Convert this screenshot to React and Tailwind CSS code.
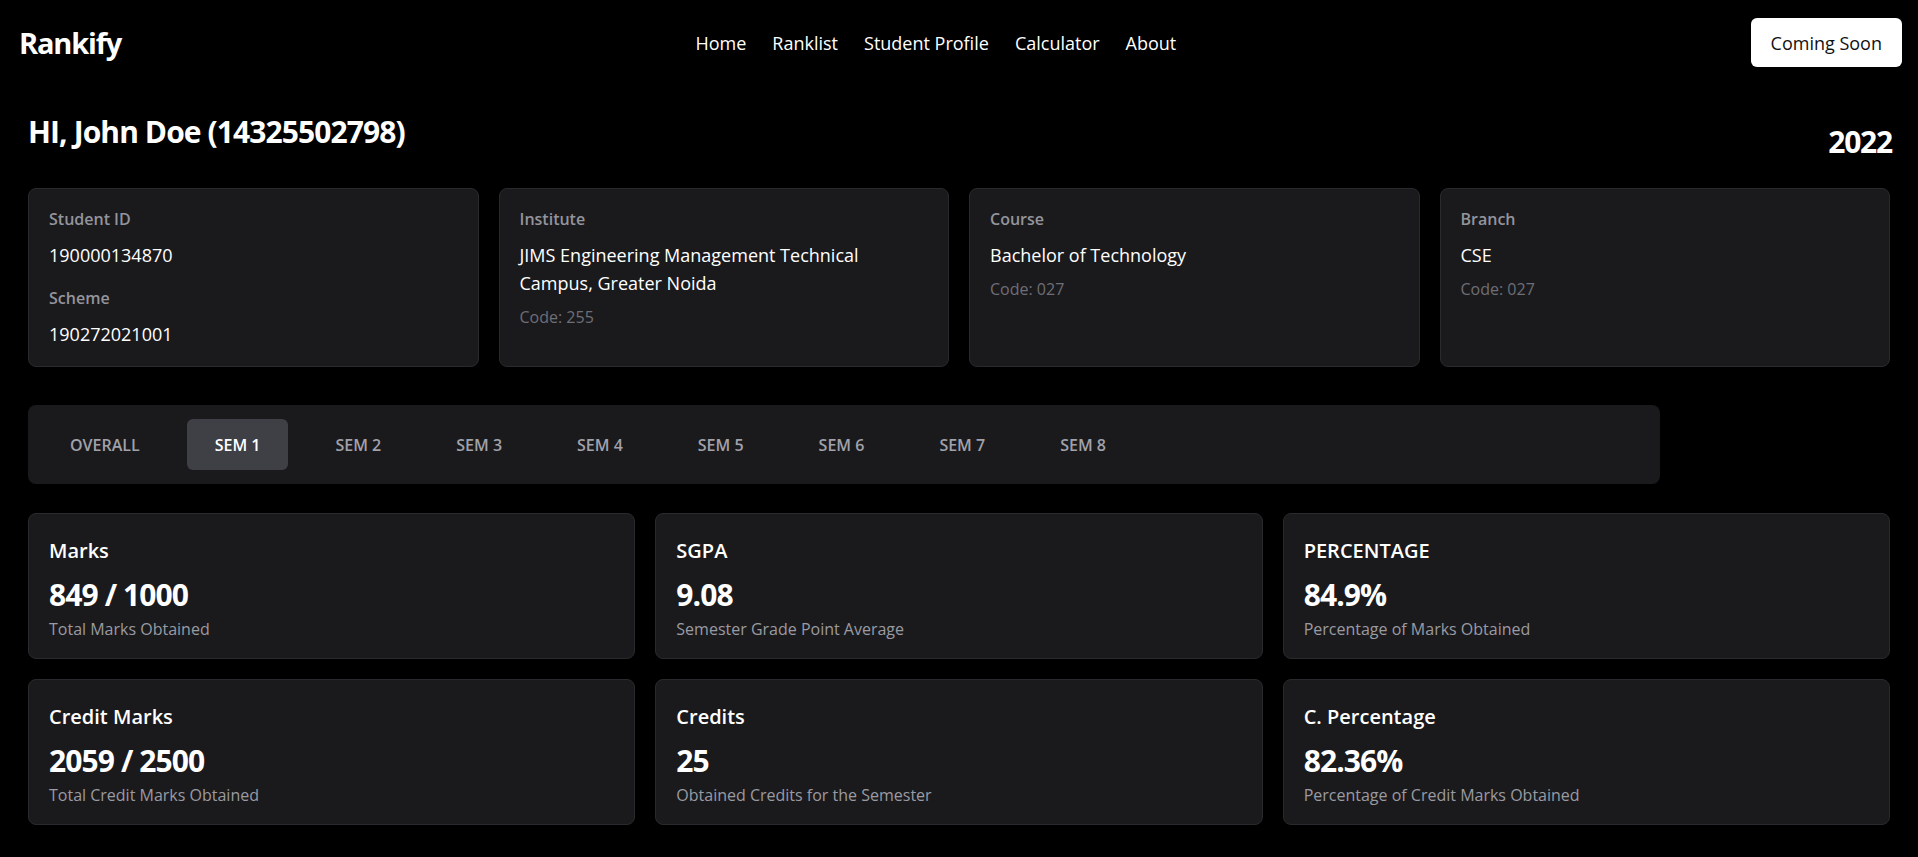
import React from "react";

const font = { fontFamily: '"Segoe UI", "Open Sans", "Noto Sans", sans-serif' };

const infoCards = [
  { rows: [{ label: "Student ID", value: "190000134870" }, { label: "Scheme", value: "190272021001" }] },
  { label: "Institute", value: "JIMS Engineering Management Technical Campus, Greater Noida", code: "Code: 255" },
  { label: "Course", value: "Bachelor of Technology", code: "Code: 027" },
  { label: "Branch", value: "CSE", code: "Code: 027" },
];

const tabs = ["OVERALL", "SEM 1", "SEM 2", "SEM 3", "SEM 4", "SEM 5", "SEM 6", "SEM 7", "SEM 8"];

const stats = [
  { title: "Marks", value: "849 / 1000", sub: "Total Marks Obtained" },
  { title: "SGPA", value: "9.08", sub: "Semester Grade Point Average" },
  { title: "PERCENTAGE", value: "84.9%", sub: "Percentage of Marks Obtained" },
  { title: "Credit Marks", value: "2059 / 2500", sub: "Total Credit Marks Obtained" },
  { title: "Credits", value: "25", sub: "Obtained Credits for the Semester" },
  { title: "C. Percentage", value: "82.36%", sub: "Percentage of Credit Marks Obtained" },
];

export default function App() {
  return (
    <div className="min-h-screen bg-black text-white" style={font}>
      <header className="flex items-center justify-between px-4 py-[18px]">
        <div className="pl-[3px] text-[29px] font-bold leading-9 tracking-[-0.04em]">Rankify</div>
        <nav className="flex items-center gap-[26px] text-lg">
          <a>Home</a>
          <a>Ranklist</a>
          <a>Student Profile</a>
          <a>Calculator</a>
          <a>About</a>
        </nav>
        <button className="h-[49px] rounded-md bg-white px-5 text-lg text-[#111]">Coming Soon</button>
      </header>

      <main className="px-7 pt-[29px] pb-8">
        <div className="flex items-start justify-between">
          <h1 className="text-3xl font-bold leading-9 tracking-[-0.03em]">HI, John Doe (14325502798)</h1>
          <div className="-mr-[2px] mt-[10px] text-3xl font-bold leading-9 tracking-[-0.04em]">2022</div>
        </div>

        <div className="mt-[28px] grid grid-cols-4 gap-5">
          {infoCards.map((c, i) => (
            <div key={i} className="h-[179px] rounded-lg border border-[#2a2a2e] bg-[#1a1a1d] px-5 pt-5">
              {c.rows ? (
                c.rows.map((r, j) => (
                  <div key={j} className={j > 0 ? "mt-[19px]" : ""}>
                    <div className="text-base font-semibold leading-5 text-[#94949c]">{r.label}</div>
                    <div className="mt-3 text-lg leading-7 text-white">{r.value}</div>
                  </div>
                ))
              ) : (
                <div>
                  <div className="text-base font-semibold leading-5 text-[#94949c]">{c.label}</div>
                  <div className="mt-3 max-w-[370px] text-lg leading-7 text-white">{c.value}</div>
                  <div className="mt-2 text-base leading-6 text-[#6e6e76]">{c.code}</div>
                </div>
              )}
            </div>
          ))}
        </div>

        <div className="mt-[38px] flex w-[1632px] gap-[19px] rounded-lg bg-[#1a1a1d] p-3.5">
          {tabs.map((t) => (
            <div
              key={t}
              className={
                t === "SEM 1"
                  ? "flex h-[51px] items-center rounded-md bg-[#3f3f46] px-7 text-base font-semibold text-white"
                  : "flex h-[51px] items-center rounded-md px-7 text-base font-semibold text-[#a1a1aa]"
              }
            >
              {t}
            </div>
          ))}
        </div>

        <div className="mt-[29px] grid grid-cols-3 gap-5">
          {stats.map((s) => (
            <div key={s.title} className="h-[146px] rounded-lg border border-[#2a2a2e] bg-[#1a1a1d] px-5 pt-[23px]">
              <div className="text-xl font-semibold leading-7 text-white">{s.title}</div>
              <div className="mt-3 text-3xl font-bold leading-9 tracking-[-0.03em] text-white">{s.value}</div>
              <div className="mt-1 text-base leading-6 text-[#9a9aa2]">{s.sub}</div>
            </div>
          ))}
        </div>
      </main>
    </div>
  );
}
